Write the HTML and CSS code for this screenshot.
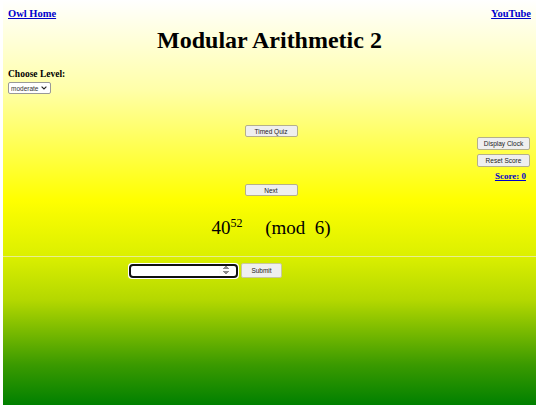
FILE: index.html
```html
<!DOCTYPE html>
<html lang="en">
<head>
  <meta charset="UTF-8" />
  <title>Modular Arithmetic 2</title>
  <link rel="stylesheet" href="styles.css">
</head>
<body>
  <div class="page">
    <div class="top-links">
      <a href="#">Owl Home</a>
      <a href="#">YouTube</a>
    </div>

    <h1>Modular Arithmetic 2</h1>

    <div class="level">
      <label for="level">Choose Level:</label>
      <span class="select-wrap">
        <select id="level">
          <option>moderate</option>
          <option>easy</option>
          <option>hard</option>
        </select>
        <svg class="chevron" width="6" height="4" viewBox="0 0 6 4"><path d="M0.6 0.6 L3 3 L5.4 0.6" fill="none" stroke="#222" stroke-width="1.1"/></svg>
      </span>
    </div>

    <div class="center-row first">
      <button class="btn">Timed Quiz</button>
    </div>

    <div class="side-panel">
      <button class="btn">Display Clock</button>
      <button class="btn">Reset Score</button>
      <a href="#" class="score">Score: 0</a>
    </div>

    <div class="center-row next">
      <button class="btn">Next</button>
    </div>

    <div class="problem">
      <span>40<sup>52</sup></span>
      <span class="mod">(mod&nbsp;&nbsp;6)</span>
    </div>

    <hr>

    <div class="answer-row">
      <input type="number" class="answer" autofocus>
      <button class="btn submit">Submit</button>
    </div>
  </div>
</body>
</html>
```

FILE: styles.css
```css
html, body {
  margin: 0;
  padding: 0;
  background: #ffffff;
  font-family: "Liberation Serif", "Times New Roman", serif;
}

.page {
  margin: 0 4px 0 3px;
  min-height: 405px;
  padding: 8px 5px 20px;
  box-sizing: border-box;
  background: linear-gradient(to bottom, #ffffff 0px, #ffffa8 90px, #ffff00 200px, #dcf000 255px, #b4d800 300px, #3a9a00 365px, #008000 405px);
}

.top-links {
  display: flex;
  justify-content: space-between;
}

.top-links a,
.score {
  color: #0000cc;
  font-weight: bold;
  font-size: 10.5px;
  text-decoration: underline;
}

h1 {
  text-align: center;
  font-size: 24px;
  margin: 8px 0 15px;
}

.level {
  display: flex;
  flex-direction: column;
  align-items: flex-start;
  gap: 3px;
}

.level label {
  font-weight: bold;
  font-size: 9.5px;
  line-height: 10px;
}

.select-wrap {
  position: relative;
  display: flex;
}

.level select {
  appearance: none;
  font-family: "Liberation Sans", Arial, sans-serif;
  font-size: 6.5px;
  color: #333;
  height: 12px;
  width: 43px;
  padding: 0 0 0 2px;
  border: 1px solid #999;
  border-radius: 2px;
  background: #ffffff;
}

.chevron {
  position: absolute;
  right: 4px;
  top: 4px;
  pointer-events: none;
}

.btn {
  font-family: "Liberation Sans", Arial, sans-serif;
  font-size: 6.5px;
  color: #222;
  background: #efefef;
  border: 1px solid #b5b08a;
  border-radius: 2px;
  width: 53px;
  height: 12px;
  padding: 0;
}

.center-row {
  display: flex;
  justify-content: center;
  padding-left: 3px;
}

.center-row.first {
  margin-top: 31px;
}

.side-panel {
  display: flex;
  flex-direction: column;
  align-items: flex-end;
  gap: 4px;
  margin-right: 1px;
}

.side-panel .btn {
  width: 53px;
  height: 13px;
}

.side-panel .score {
  font-size: 9px;
  margin-right: 4px;
}

.center-row.next {
  margin-top: 3px;
}

.problem {
  text-align: center;
  font-size: 19px;
  margin: 20px 0 0;
  padding-left: 3px;
}

.problem sup {
  font-size: 12px;
}

.problem .mod {
  margin-left: 18px;
}

hr {
  border: 0;
  border-top: 1px solid #e8ee90;
  margin: 17px -5px 6px;
}

.answer-row {
  display: flex;
  align-items: center;
  gap: 3px;
  padding-left: 121px;
}

.answer {
  width: 109px;
  height: 14px;
  box-sizing: border-box;
  border: 2px solid #111;
  border-radius: 2px;
  background: #ffffff;
  font-size: 8px;
}

.submit {
  width: 41px;
  height: 15px;
  border-color: #c8c8a0;
}
```
